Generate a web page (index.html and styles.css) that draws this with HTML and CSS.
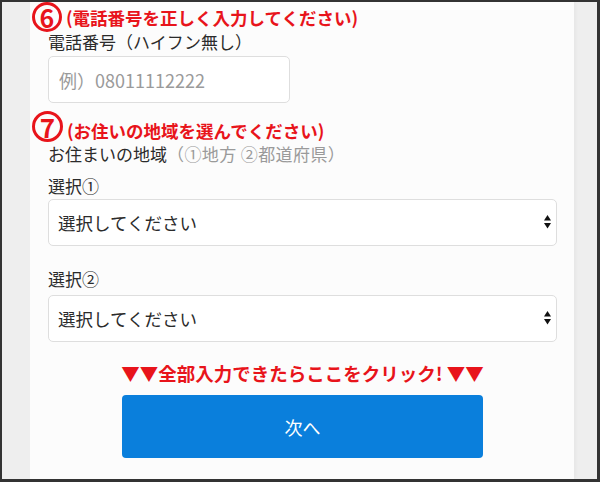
FILE: index.html
```html
<!DOCTYPE html>
<html lang="ja">
<head>
    <meta charset="UTF-8">
    <meta name="viewport" content="width=device-width, initial-scale=1.0">
    <title>お申し込みフォーム</title>
    <link rel="stylesheet" href="styles.css">
</head>
<body>
    <div class="screen">
        <main class="panel">
            <div class="step step-tel">
                <span class="num">6</span>
                <span class="step-text">(電話番号を正しく入力してください)</span>
            </div>
            <label class="label tel-label" for="tel">電話番号（ハイフン無し）</label>
            <input class="text-input" id="tel" type="tel" placeholder="例）08011112222">

            <div class="step step-area">
                <span class="num">7</span>
                <span class="step-text">(お住いの地域を選んでください)</span>
            </div>
            <p class="label">お住まいの地域<span class="hint">（①地方 ②都道府県）</span></p>

            <label class="label sub-label" for="area">選択①</label>
            <div class="select-wrap">
                <select id="area" class="select">
                    <option>選択してください</option>
                </select>
                <svg class="arrows" width="7" height="14" viewBox="0 0 7 14">
                    <path d="M3.5 0 L7 5.5 L0 5.5 Z"/>
                    <path d="M0 8 L7 8 L3.5 13.5 Z"/>
                </svg>
            </div>

            <label class="label sub-label second" for="pref">選択②</label>
            <div class="select-wrap select-pref">
                <select id="pref" class="select">
                    <option>選択してください</option>
                </select>
                <svg class="arrows" width="7" height="14" viewBox="0 0 7 14">
                    <path d="M3.5 0 L7 5.5 L0 5.5 Z"/>
                    <path d="M0 8 L7 8 L3.5 13.5 Z"/>
                </svg>
            </div>

            <p class="cta-note">▼▼全部入力できたらここをクリック! ▼▼</p>
            <button class="next-btn" type="button">次へ</button>
        </main>
    </div>
</body>
</html>
```

FILE: styles.css
```css
:root {
    --red: #e8141b;
    --blue: #0a7fdc;
    --text: #2b2b2b;
    --muted: #9a9a9a;
    --line: #dedede;
}

* {
    box-sizing: border-box;
}

body {
    margin: 0;
    font-family: "Noto Sans CJK JP", "Noto Sans", sans-serif;
    color: var(--text);
}

.screen {
    width: 600px;
    height: 482px;
    display: flex;
    background: #eeeeee;
    border-style: solid;
    border-color: #333;
    border-width: 2px 3px 3px 2px;
    overflow: hidden;
}

.panel {
    width: 544px;
    margin-left: 28px;
    padding: 0 17px 0 18px;
    background: #fcfcfc;
    box-shadow: 2px 0 3px rgba(0, 0, 0, 0.03);
    display: flex;
    flex-direction: column;
}

.step {
    display: flex;
    align-items: flex-end;
    gap: 4px;
    margin-left: -16px;
}

.step-tel {
    height: 30px;
}

.step-tel .step-text {
    margin-bottom: 3px;
}

.step-area {
    margin-top: 7px;
    height: 32px;
}

.num {
    width: 31px;
    height: 31px;
    flex: none;
    border: 3px solid var(--red);
    border-radius: 50%;
    color: var(--red);
    font-size: 26px;
    font-weight: 700;
    line-height: 1;
    display: flex;
    align-items: center;
    justify-content: center;
}

.step-tel .num {
    width: 30px;
    height: 30px;
    font-size: 25px;
}

.step-text {
    color: var(--red);
    font-size: 17.5px;
    font-weight: 700;
    line-height: 22px;
}

.label {
    display: block;
    margin: 0;
    font-size: 17px;
    line-height: 24px;
}

.tel-label {
    margin-top: -2px;
}

.hint {
    color: var(--muted);
    letter-spacing: 0.4px;
}

.sub-label {
    margin-top: 8px;
}

.sub-label.second {
    margin-top: 21px;
}

.text-input {
    width: 242px;
    height: 47px;
    margin-top: 2px;
    padding: 0 10px;
    border: 1px solid var(--line);
    border-radius: 5px;
    background: #fff;
    font-family: inherit;
    font-size: 18px;
}

.text-input::placeholder {
    color: var(--muted);
}

.select-wrap {
    position: relative;
    margin-top: 1px;
}

.select-pref {
    margin-top: 4px;
}

.select {
    width: 100%;
    height: 47px;
    padding: 0 9px;
    border: 1px solid var(--line);
    border-radius: 5px;
    background: #fff;
    color: var(--text);
    font-family: inherit;
    font-size: 17.5px;
    appearance: none;
    -webkit-appearance: none;
}

.arrows {
    position: absolute;
    right: 6px;
    top: 16px;
    fill: #111;
}

.cta-note {
    margin: 19px 0 0;
    text-align: center;
    color: var(--red);
    font-size: 18.5px;
    font-weight: 700;
    line-height: 24px;
}

.next-btn {
    width: 361px;
    height: 63px;
    margin: 10px auto 0;
    border: none;
    border-radius: 4px;
    background: var(--blue);
    color: #fff;
    font-family: inherit;
    font-size: 18px;
}
```
